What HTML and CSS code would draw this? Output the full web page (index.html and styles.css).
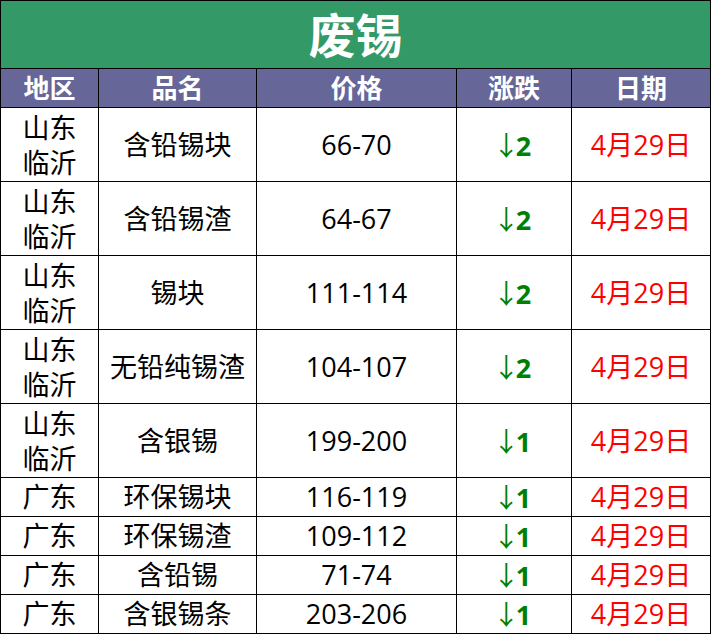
FILE: index.html
```html
<!DOCTYPE html>
<html lang="zh-CN">
<head>
<meta charset="utf-8">
<title>废锡</title>
<link rel="stylesheet" href="styles.css">
</head>
<body>
<table class="sheet">
  <colgroup>
    <col class="c-region">
    <col class="c-name">
    <col class="c-price">
    <col class="c-change">
    <col class="c-date">
  </colgroup>
  <thead>
    <tr class="title-row"><th colspan="5" class="title">废锡</th></tr>
    <tr class="head-row">
      <th>地区</th><th>品名</th><th>价格</th><th>涨跌</th><th>日期</th>
    </tr>
  </thead>
  <tbody>
    <tr class="tall"><td class="region">山东<br>临沂</td><td>含铅锡块</td><td>66-70</td><td class="chg"><span class="arr">↓</span>2</td><td class="date">4月29日</td></tr>
    <tr class="tall"><td class="region">山东<br>临沂</td><td>含铅锡渣</td><td>64-67</td><td class="chg"><span class="arr">↓</span>2</td><td class="date">4月29日</td></tr>
    <tr class="tall"><td class="region">山东<br>临沂</td><td>锡块</td><td>111-114</td><td class="chg"><span class="arr">↓</span>2</td><td class="date">4月29日</td></tr>
    <tr class="tall"><td class="region">山东<br>临沂</td><td>无铅纯锡渣</td><td>104-107</td><td class="chg"><span class="arr">↓</span>2</td><td class="date">4月29日</td></tr>
    <tr class="tall"><td class="region">山东<br>临沂</td><td>含银锡</td><td>199-200</td><td class="chg"><span class="arr">↓</span>1</td><td class="date">4月29日</td></tr>
    <tr class="short"><td class="region">广东</td><td>环保锡块</td><td>116-119</td><td class="chg"><span class="arr">↓</span>1</td><td class="date">4月29日</td></tr>
    <tr class="short"><td class="region">广东</td><td>环保锡渣</td><td>109-112</td><td class="chg"><span class="arr">↓</span>1</td><td class="date">4月29日</td></tr>
    <tr class="short"><td class="region">广东</td><td>含铅锡</td><td>71-74</td><td class="chg"><span class="arr">↓</span>1</td><td class="date">4月29日</td></tr>
    <tr class="short"><td class="region">广东</td><td>含银锡条</td><td>203-206</td><td class="chg"><span class="arr">↓</span>1</td><td class="date">4月29日</td></tr>
  </tbody>
</table>
</body>
</html>
```
FILE: styles.css
```css
html, body {
  margin: 0;
  padding: 0;
  background: #ffffff;
}
body {
  font-family: "Open Sans", "Noto Sans CJK SC", sans-serif;
  color: #000000;
}
.sheet {
  width: 710px;
  table-layout: fixed;
  border-collapse: collapse;
}
.c-region { width: 98px; }
.c-name { width: 158px; }
.c-price { width: 200px; }
.c-change { width: 115px; }
.c-date { width: 139px; }

.sheet th, .sheet td {
  border: 1px solid #000000;
  padding: 0;
  text-align: center;
  vertical-align: middle;
  font-size: 27px;
  line-height: 35px;
  overflow: hidden;
  white-space: nowrap;
}
.sheet .title-row { height: 68px; }
.sheet .title {
  background: #339966;
  color: #ffffff;
  font-size: 47px;
  font-weight: 700;
  line-height: 60px;
}
.head-row { height: 39px; }
.sheet .head-row th {
  background: #666699;
  color: #ffffff;
  font-weight: 700;
  font-size: 26px;
  line-height: 34px;
}
.tall { height: 74px; }
.short { height: 39px; }
.sheet .short td { line-height: 34px; }
.sheet .chg {
  color: #008000;
  font-weight: 700;
  padding-right: 4px;
}
.arr {
  font-family: "Noto Sans CJK SC", sans-serif;
  font-weight: 400;
  letter-spacing: -4px;
}
.sheet .date {
  color: #ff0000;
}
```
